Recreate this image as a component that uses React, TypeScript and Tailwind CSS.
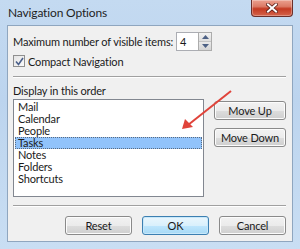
import React from 'react';

const items = ['Mail', 'Calendar', 'People', 'Tasks', 'Notes', 'Folders', 'Shortcuts'];

const Btn = ({ label, w, focused }: { label: string; w: string; focused?: boolean }) => (
  <div
    className={`${w} h-[19px] rounded-[3px] border flex items-center justify-center text-[11px] leading-[13px] text-[#1a1a1a] ${
      focused
        ? 'border-[#3c7fb1] bg-[linear-gradient(#eaf6fd_0%,#d9f0fc_50%,#bee6fd_51%,#a7d9f5_100%)] shadow-[inset_0_0_0_1px_#c8e8fa]'
        : 'border-[#8a8a8a] bg-[linear-gradient(#f2f2f2_0%,#ebebeb_50%,#dddddd_51%,#cfcfcf_100%)] shadow-[inset_0_0_0_1px_#fcfcfc]'
    }`}
  >
    {label}
  </div>
);

export default function App() {
  return (
    <div className="relative w-[300px] h-[249px] overflow-hidden bg-[linear-gradient(180deg,#c4daf1_0%,#bcd4ee_40%,#c9def3_100%)] font-['Lato',sans-serif] leading-[13px] tracking-[-0.15px] select-none">
      {/* title bar */}
      <div className="h-[25px] flex items-center pl-[8px] text-[12px] text-[#1e1e1e]">Navigation Options</div>

      {/* close button */}
      <div className="absolute right-[7px] top-0 w-[42px] h-[17px] rounded-b-[4px] border border-t-0 border-[#6b2f2a] bg-[linear-gradient(#eba08f_0%,#dc7b66_40%,#c43a22_55%,#d4644b_100%)] flex items-center justify-center shadow-[inset_0_0_0_1px_rgba(255,255,255,0.3)]">
        <svg width="12" height="10" viewBox="0 0 12 10">
          <path d="M2 1.5 L10 8.5 M10 1.5 L2 8.5" stroke="#5a1f18" strokeWidth="3.6" strokeLinecap="square" />
          <path d="M2 1.5 L10 8.5 M10 1.5 L2 8.5" stroke="#ffffff" strokeWidth="2" strokeLinecap="square" />
        </svg>
      </div>

      {/* client area */}
      <div className="mx-[7px] h-[217px] border border-[#8fa6bf] bg-[#f0f0f0] pl-[5px] pr-[6px] pt-[6px] text-[11px] text-[#1a1a1a] whitespace-nowrap">
        <div className="flex items-center h-[19px]">
          <span className="w-[163px]">Maximum number of visible items:</span>
          <div className="w-[22px] h-[19px] border border-[#abadb3] border-r-0 bg-white flex items-center pl-[3px]">4</div>
          <div className="w-[14px] h-[19px] flex flex-col border border-[#acacac]">
            <div className="flex-1 flex items-center justify-center bg-[linear-gradient(#f2f2f2,#dedede)] border-b border-[#c4c4c4]">
              <svg width="7" height="4" viewBox="0 0 7 4"><path d="M0 4 L3.5 0 L7 4 Z" fill="#4d6185" /></svg>
            </div>
            <div className="flex-1 flex items-center justify-center bg-[linear-gradient(#eaeaea,#d4d4d4)]">
              <svg width="7" height="4" viewBox="0 0 7 4"><path d="M0 0 L3.5 4 L7 0 Z" fill="#4d6185" /></svg>
            </div>
          </div>
        </div>

        <div className="flex items-center mt-[4px] h-[12px]">
          <div className="w-[12px] h-[12px] border border-[#8f8f8f] bg-[linear-gradient(135deg,#e4e4e4,#fafafa)] flex items-center justify-center">
            <svg width="9" height="9" viewBox="0 0 9 9"><path d="M1 4.5 L3.5 7.5 L8 1" stroke="#4a5f8a" strokeWidth="1.6" fill="none" /></svg>
          </div>
          <span className="ml-[3px]">Compact Navigation</span>
        </div>

        <div className="mt-[9px] border-t border-[#a0a0a0] border-b border-b-white" />

        <div className="mt-[6px] h-[13px]">Display in this order</div>

        <div className="mt-[2px] flex">
          <div className="w-[191px] h-[98px] border border-[#828790] bg-white py-[1px] px-[1px]">
            {items.map((it) => (
              <div
                key={it}
                className={`h-[12px] leading-[12px] pl-[3px] ${
                  it === 'Tasks' ? 'bg-[#91c3fb] outline-1 outline-dotted outline-[#5a6b80] -outline-offset-1' : ''
                }`}
              >
                {it}
              </div>
            ))}
          </div>
          <div className="ml-[10px] flex flex-col gap-[8px] pt-[2px]">
            <Btn label="Move Up" w="w-[72px]" />
            <Btn label="Move Down" w="w-[72px]" />
          </div>
        </div>

        <div className="mt-[8px] border-t border-[#a0a0a0] border-b border-b-white" />

        <div className="mt-[9px] flex justify-end gap-[10px]">
          <Btn label="Reset" w="w-[67px]" />
          <Btn label="OK" w="w-[67px]" focused />
          <Btn label="Cancel" w="w-[67px]" />
        </div>
      </div>

      {/* annotation arrow */}
      <svg className="absolute left-0 top-0 pointer-events-none" width="300" height="249">
        <line x1="231" y1="91" x2="188" y2="125" stroke="#e0433a" strokeWidth="2" />
        <path d="M182 129 L185 119 L193 127 Z" fill="#e0433a" />
      </svg>
    </div>
  );
}
